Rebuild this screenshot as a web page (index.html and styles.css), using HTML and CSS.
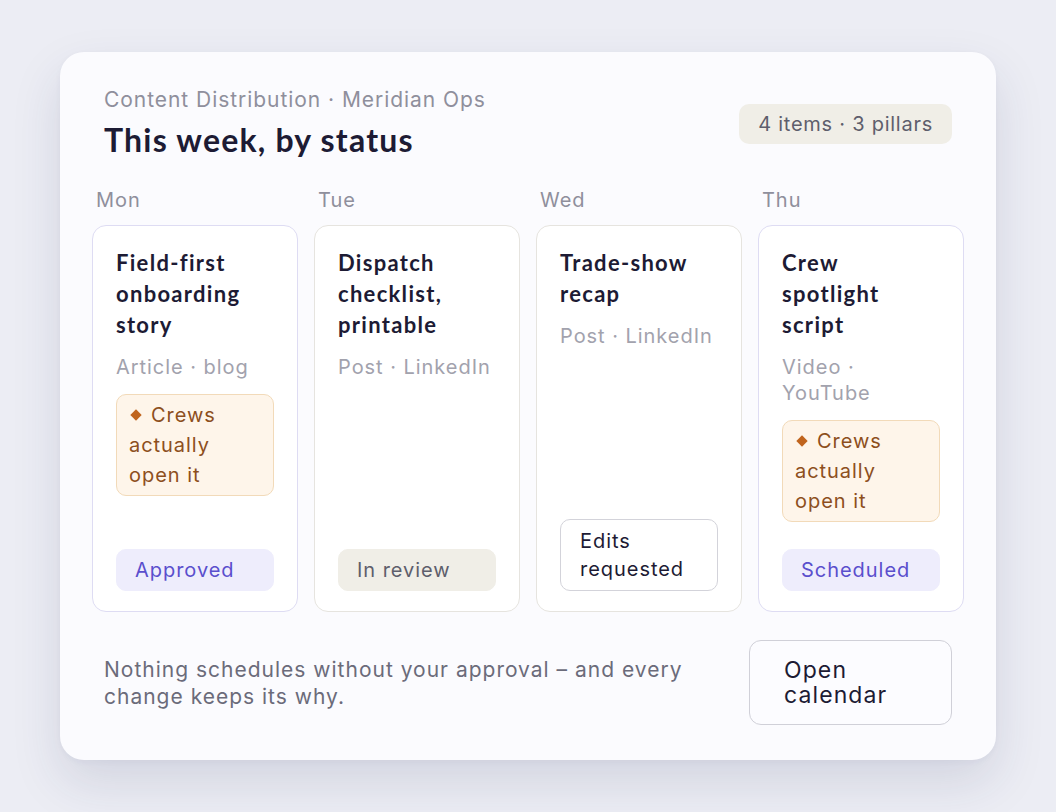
FILE: index.html
```html
<!DOCTYPE html>
<html lang="en">
<head>
<meta charset="utf-8">
<title>This week, by status</title>
<link rel="stylesheet" href="styles.css">
</head>
<body>
<main class="panel">
  <header class="panel-head">
    <div class="head-text">
      <div class="eyebrow">Content Distribution · Meridian Ops</div>
      <h1 class="title">This week, by status</h1>
    </div>
    <span class="count-pill">4 items · 3 pillars</span>
  </header>

  <section class="week">
    <div class="day">
      <div class="day-label">Mon</div>
      <article class="item item-accent">
        <h2 class="item-title">Field-first onboarding story</h2>
        <div class="item-meta">Article · blog</div>
        <div class="pillar"><span class="diamond" aria-hidden="true"></span>Crews actually open it</div>
        <div class="status status-approved">Approved</div>
      </article>
    </div>
    <div class="day">
      <div class="day-label">Tue</div>
      <article class="item item-neutral">
        <h2 class="item-title">Dispatch checklist, printable</h2>
        <div class="item-meta">Post · LinkedIn</div>
        <div class="status status-review">In review</div>
      </article>
    </div>
    <div class="day">
      <div class="day-label">Wed</div>
      <article class="item item-neutral">
        <h2 class="item-title">Trade-show recap</h2>
        <div class="item-meta">Post · LinkedIn</div>
        <div class="status status-edits">Edits requested</div>
      </article>
    </div>
    <div class="day">
      <div class="day-label">Thu</div>
      <article class="item item-accent">
        <h2 class="item-title">Crew spotlight script</h2>
        <div class="item-meta">Video · YouTube</div>
        <div class="pillar"><span class="diamond" aria-hidden="true"></span>Crews actually open it</div>
        <div class="status status-scheduled">Scheduled</div>
      </article>
    </div>
  </section>

  <footer class="panel-foot">
    <p class="foot-note">Nothing schedules without your approval – and every change keeps its why.</p>
    <button class="open-btn" type="button">Open calendar</button>
  </footer>
</main>
</body>
</html>
```

FILE: styles.css
```css
* { box-sizing: border-box; }

html, body {
  margin: 0;
  padding: 0;
}

body {
  background: #ecedf4;
  font-family: Inter, "Noto Sans", "Liberation Sans", sans-serif;
  letter-spacing: 0.06em;
  color: #1d1b34;
  padding: 52px 60px;
  min-height: 812px;
}

.panel {
  width: 936px;
  background: #fbfbfe;
  border-radius: 24px;
  box-shadow: 0 22px 50px rgba(40, 44, 90, 0.13), 0 2px 6px rgba(40, 44, 90, 0.04);
  padding: 36px 32px 35px;
}

.panel-head {
  display: flex;
  justify-content: space-between;
  align-items: center;
  padding: 0 12px;
}

.eyebrow {
  font-size: 21px;
  letter-spacing: 0.95px;
  line-height: 24px;
  color: #8f8f9c;
}

.title {
  margin: 8px 0 0;
  font-family: Lato, Inter, sans-serif;
  font-weight: 700;
  font-size: 32px;
  letter-spacing: 1.2px;
  line-height: 40px;
  color: #1d1b34;
}

.count-pill {
  background: #f0eee7;
  color: #5e5e6c;
  font-size: 20px;
  letter-spacing: 0.75px;
  line-height: 40px;
  padding: 0 19px;
  border-radius: 10px;
}

.week {
  display: grid;
  grid-template-columns: repeat(4, 1fr);
  gap: 16px;
  margin-top: 28px;
}

.day {
  display: flex;
  flex-direction: column;
}

.day-label {
  font-size: 20px;
  line-height: 24px;
  color: #8f8f9c;
  padding-left: 4px;
  margin-bottom: 13px;
}

.item {
  min-height: 387px;
  background: #ffffff;
  border: 1.5px solid #e4e3df;
  border-radius: 14px;
  padding: 21px 23px 20px;
  display: flex;
  flex-direction: column;
  gap: 14px;
}

.item-accent { border-color: #dedcf3; }
.item-neutral { border-color: #e6e4df; }

.item-title {
  margin: 0;
  font-family: Lato, Inter, sans-serif;
  font-weight: 700;
  font-size: 22px;
  letter-spacing: 1.3px;
  line-height: 31px;
  color: #1d1b34;
}

.item-meta {
  font-size: 20px;
  line-height: 26px;
  color: #a2a2ad;
}

.pillar {
  background: #fef5ea;
  border: 1px solid #f2dab9;
  border-radius: 10px;
  color: #8d4f1d;
  font-size: 20px;
  line-height: 30px;
  padding: 5px 12px;
}

.diamond {
  display: inline-block;
  width: 8px;
  height: 8px;
  background: #c0641d;
  transform: rotate(45deg);
  margin: 0 11px 0 3px;
  vertical-align: 3px;
}

.status {
  margin-top: auto;
  font-size: 20px;
  line-height: 28px;
  padding: 6px 18px;
  border-radius: 10px;
  border: 1px solid transparent;
}

.status-approved {
  background: #eeedfc;
  border-color: #eeedfc;
  color: #5a4fcd;
}

.status-scheduled {
  background: #eeedfc;
  border-color: #eeedfc;
  color: #5a4fcd;
}

.status-review {
  background: #f0eee7;
  border-color: #f0eee7;
  color: #5e5e6c;
}

.status-edits {
  background: #ffffff;
  border: 1.5px solid #d3d3da;
  color: #1d1b34;
  padding: 7px 19px;
}

.panel-foot {
  display: flex;
  align-items: center;
  justify-content: space-between;
  gap: 24px;
  padding: 0 12px;
  margin-top: 28px;
}

.foot-note {
  margin: 0;
  max-width: 620px;
  font-size: 21px;
  letter-spacing: 1px;
  line-height: 27px;
  color: #6b6b7a;
}

.open-btn {
  width: 203px;
  height: 85px;
  flex: 0 0 auto;
  background: #fcfcff;
  border: 1.5px solid #d0d0d8;
  border-radius: 12px;
  font-family: Inter, "Noto Sans", sans-serif;
  font-size: 23px;
  letter-spacing: 1.1px;
  line-height: 25px;
  color: #1d1b34;
  text-align: left;
  padding: 0 34px;
}
```
